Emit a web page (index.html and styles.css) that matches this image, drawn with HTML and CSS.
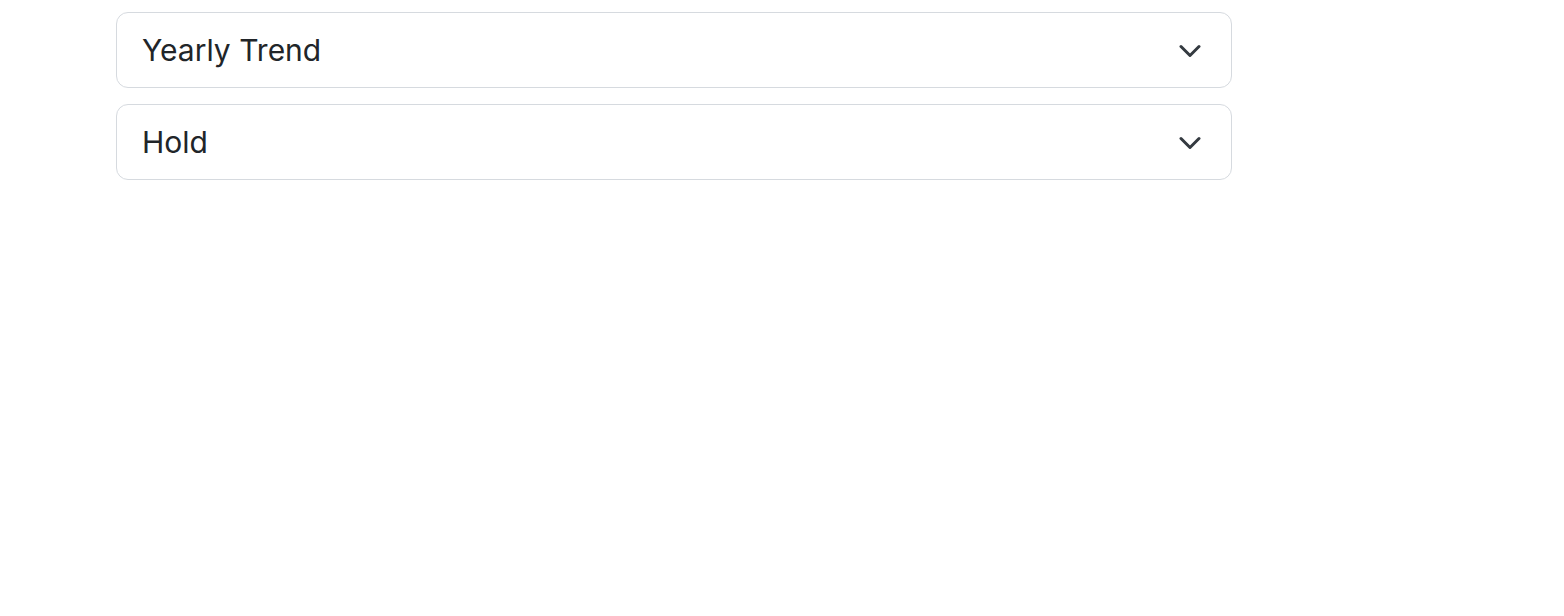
FILE: index.html
```html
<!DOCTYPE html>
<html lang="en">
  <head>
    <meta charset="UTF-8" />
    <meta name="viewport" content="width=device-width, initial-scale=1.0" />
    <title>Filters</title>
    <link rel="stylesheet" href="styles.css">
  </head>
  <body>
    <div class="filters">
      <div class="select">
        <span class="select-text">Yearly Trend</span>
        <svg class="chevron" viewBox="0 0 16 12" width="24" height="18">
          <path fill="none" stroke="#343a40" stroke-linecap="round" stroke-linejoin="round" stroke-width="2" d="m2 5 6 6 6-6" />
        </svg>
      </div>
      <div class="select">
        <span class="select-text">Hold</span>
        <svg class="chevron" viewBox="0 0 16 12" width="24" height="18">
          <path fill="none" stroke="#343a40" stroke-linecap="round" stroke-linejoin="round" stroke-width="2" d="m2 5 6 6 6-6" />
        </svg>
      </div>
    </div>
  </body>
</html>
```

FILE: styles.css
```css
body {
  margin: 0;
  background-color: #fff;
  font-family: Inter, "Liberation Sans", Arial, sans-serif;
  color: #212529;
}
.filters {
  display: flex;
  flex-direction: column;
  gap: 16px;
  width: 1116px;
  margin-left: 116px;
  padding-top: 12px;
}
.select {
  display: flex;
  align-items: center;
  justify-content: space-between;
  box-sizing: border-box;
  height: 76px;
  padding: 0 29px 0 25px;
  border: 1.5px solid #d6dadf;
  border-radius: 12px;
  background-color: #fff;
}
.select-text {
  font-size: 30px;
  line-height: 1;
}
.chevron {
  display: block;
  margin-top: -5px;
}
```
